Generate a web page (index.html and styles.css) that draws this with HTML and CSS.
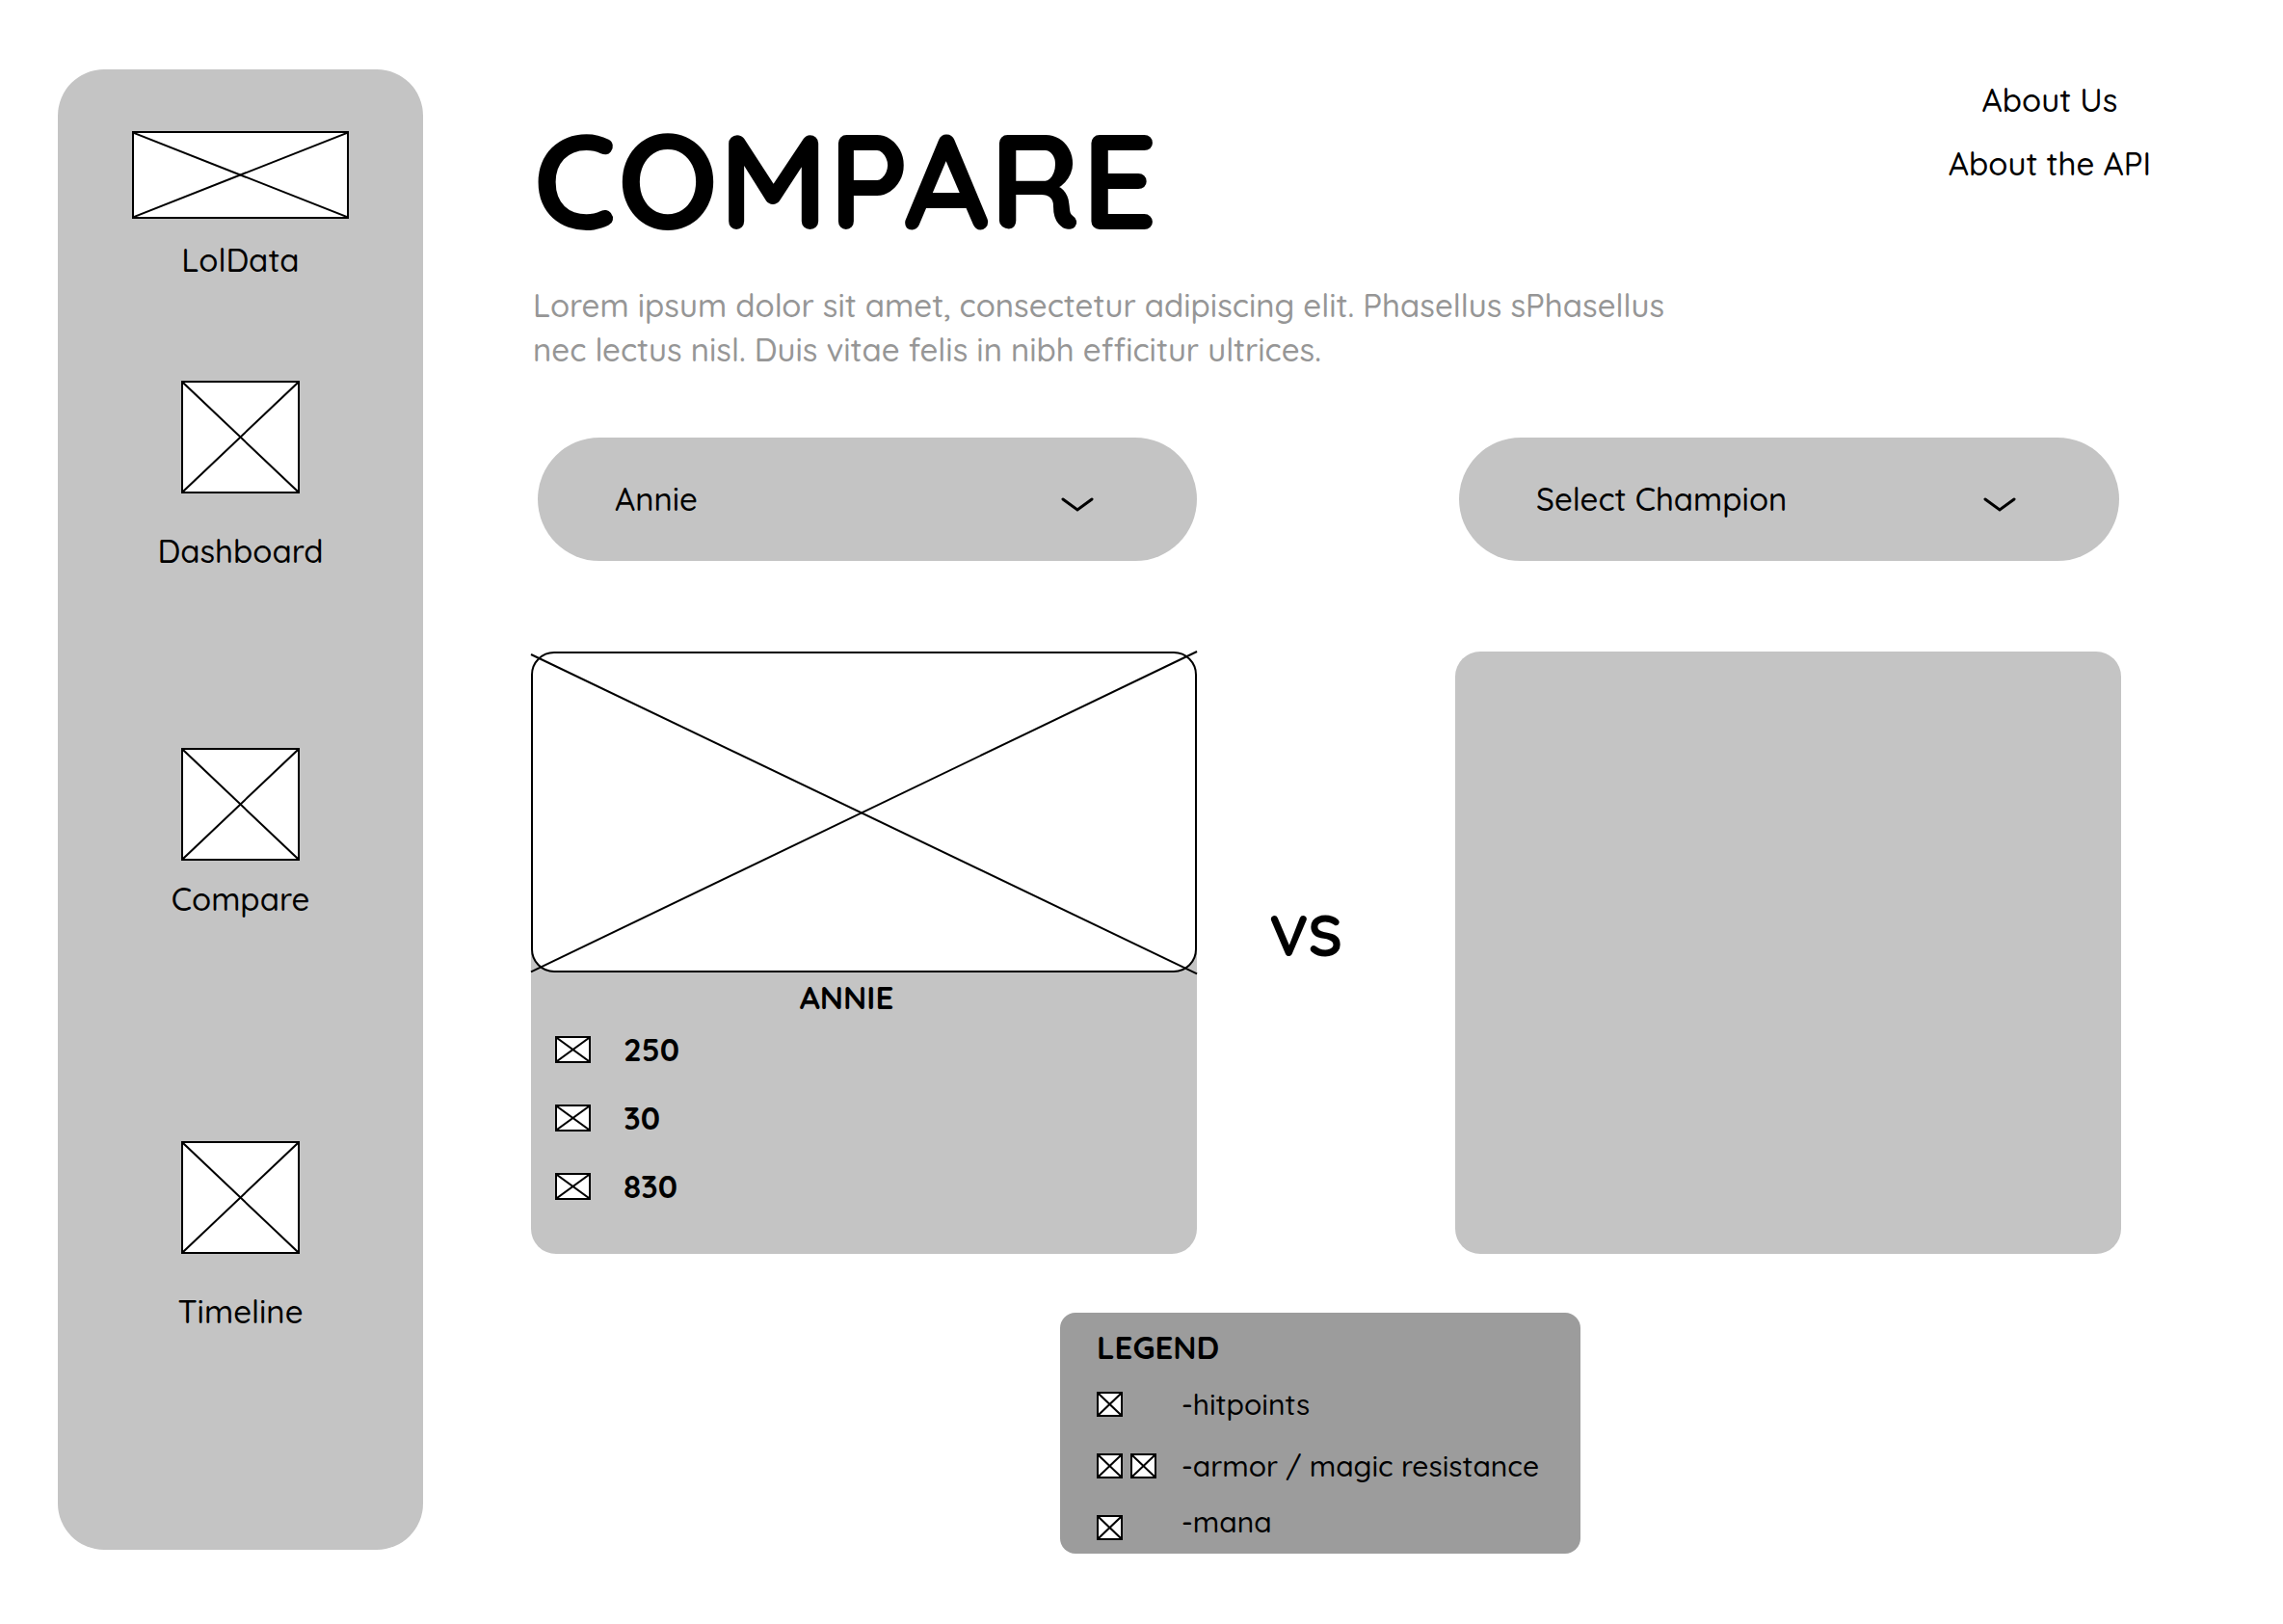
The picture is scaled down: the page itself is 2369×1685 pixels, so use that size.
FILE: index.html
```html
<!DOCTYPE html>
<html lang="en">
<head>
<meta charset="utf-8">
<title>Compare - LolData</title>
<link rel="stylesheet" href="styles.css">
</head>
<body>
<div class="page">
  <nav class="sidebar" aria-label="Main">
    <a class="side-link side-logo" href="#">
      <svg class="placeholder logo-box" aria-hidden="true"><line x1="0" y1="0" x2="100%" y2="100%"/><line x1="0" y1="100%" x2="100%" y2="0"/></svg>
      <span>LolData</span>
    </a>
    <a class="side-link side-dashboard" href="#">
      <svg class="placeholder side-box" aria-hidden="true"><line x1="0" y1="0" x2="100%" y2="100%"/><line x1="0" y1="100%" x2="100%" y2="0"/></svg>
      <span>Dashboard</span>
    </a>
    <a class="side-link side-compare" href="#">
      <svg class="placeholder side-box" aria-hidden="true"><line x1="0" y1="0" x2="100%" y2="100%"/><line x1="0" y1="100%" x2="100%" y2="0"/></svg>
      <span>Compare</span>
    </a>
    <a class="side-link side-timeline" href="#">
      <svg class="placeholder side-box" aria-hidden="true"><line x1="0" y1="0" x2="100%" y2="100%"/><line x1="0" y1="100%" x2="100%" y2="0"/></svg>
      <span>Timeline</span>
    </a>
  </nav>

  <main class="main">
    <header class="header">
      <div class="intro">
        <h1>COMPARE</h1>
        <p>Lorem ipsum dolor sit amet, consectetur adipiscing elit. Phasellus sPhasellus<br>nec lectus nisl. Duis vitae felis in nibh efficitur ultrices.</p>
      </div>
      <nav class="about" aria-label="About">
        <a href="#">About Us</a>
        <a href="#">About the API</a>
      </nav>
    </header>

    <section class="compare">
      <div class="picker">
        <select aria-label="First champion"><option>Annie</option></select>
        <svg class="chevron" viewBox="0 0 34 16" aria-hidden="true"><path d="M2 2L17 13L32 2"/></svg>
      </div>
      <div class="picker picker-right">
        <select aria-label="Second champion"><option>Select Champion</option></select>
        <svg class="chevron" viewBox="0 0 34 16" aria-hidden="true"><path d="M2 2L17 13L32 2"/></svg>
      </div>
      <article class="card card-filled">
        <svg class="placeholder portrait" aria-hidden="true"><line x1="-2" y1="1" x2="100.3%" y2="101%"/><line x1="-2" y1="100.4%" x2="100.3%" y2="-2"/></svg>
        <h2>ANNIE</h2>
        <ul class="stats">
          <li><svg class="placeholder stat-box" aria-hidden="true"><line x1="0" y1="0" x2="100%" y2="100%"/><line x1="0" y1="100%" x2="100%" y2="0"/></svg>250</li>
          <li><svg class="placeholder stat-box" aria-hidden="true"><line x1="0" y1="0" x2="100%" y2="100%"/><line x1="0" y1="100%" x2="100%" y2="0"/></svg>30</li>
          <li><svg class="placeholder stat-box" aria-hidden="true"><line x1="0" y1="0" x2="100%" y2="100%"/><line x1="0" y1="100%" x2="100%" y2="0"/></svg>830</li>
        </ul>
      </article>
      <div class="versus">VS</div>
      <article class="card"></article>
    </section>

    <section class="legend">
      <h2>LEGEND</h2>
      <ul>
        <li><span class="keys"><svg class="placeholder key-box" aria-hidden="true"><line x1="0" y1="0" x2="100%" y2="100%"/><line x1="0" y1="100%" x2="100%" y2="0"/></svg></span><span>-hitpoints</span></li>
        <li><span class="keys"><svg class="placeholder key-box" aria-hidden="true"><line x1="0" y1="0" x2="100%" y2="100%"/><line x1="0" y1="100%" x2="100%" y2="0"/></svg><svg class="placeholder key-box" aria-hidden="true"><line x1="0" y1="0" x2="100%" y2="100%"/><line x1="0" y1="100%" x2="100%" y2="0"/></svg></span><span>-armor / magic resistance</span></li>
        <li><span class="keys"><svg class="placeholder key-box" aria-hidden="true"><line x1="0" y1="0" x2="100%" y2="100%"/><line x1="0" y1="100%" x2="100%" y2="0"/></svg></span><span>-mana</span></li>
      </ul>
    </section>
  </main>
</div>
</body>
</html>
```

FILE: styles.css
```css
* {
  box-sizing: border-box;
}

body {
  margin: 0;
  background: #fff;
  color: #000;
  font: 500 33px/42px Quicksand, Lato, sans-serif;
}

h1, h2, p, ul {
  margin: 0;
  padding: 0;
}

ul {
  list-style: none;
}

a {
  color: inherit;
  text-decoration: none;
}

.page {
  display: flex;
  align-items: flex-start;
  padding: 72px 137px 72px 60px;
}

/* Crossed box that stands in for an image */
.placeholder {
  display: block;
  flex: none;
  background: #fff;
  border: 2px solid #000;
}

.placeholder line {
  stroke: #000;
  stroke-width: 2;
}

.sidebar {
  display: flex;
  flex: none;
  flex-direction: column;
  align-items: center;
  width: 379px;
  padding: 64px 0 226px;
  background: #c4c4c4;
  border-radius: 48px;
}

.side-link {
  display: flex;
  flex-direction: column;
  align-items: center;
}

.logo-box {
  width: 225px;
  height: 91px;
}

.side-box {
  width: 123px;
  height: 117px;
}

.side-logo {
  gap: 22px;
}

.side-dashboard {
  gap: 39px;
  margin-top: 104px;
}

.side-compare {
  gap: 19px;
  margin-top: 183px;
}

.side-timeline {
  gap: 39px;
  margin-top: 230px;
}

.main {
  flex: 1;
  min-width: 0;
  padding-left: 112px;
}

.header {
  display: flex;
  justify-content: space-between;
  padding-top: 11px;
}

.intro {
  padding-top: 32px;
  padding-left: 2px;
}

h1 {
  font-size: 139px;
  line-height: 142px;
}

.intro p {
  margin-top: 37px;
  color: #969696;
  line-height: 46px;
}

.about {
  display: flex;
  flex-direction: column;
  align-items: center;
  gap: 24px;
}

.compare {
  display: grid;
  grid-template-columns: 1fr 268px 1fr;
  row-gap: 94px;
  padding: 68px 31px 0 0;
}

.picker {
  position: relative;
  margin-left: 7px;
}

.picker-right {
  grid-column: 3;
  margin: 0 2px 0 4px;
}

.picker select {
  appearance: none;
  display: block;
  width: 100%;
  height: 128px;
  padding: 0 120px 0 80px;
  background: #c4c4c4;
  border: 0;
  border-radius: 64px;
  color: #000;
  font: inherit;
}

.chevron {
  position: absolute;
  top: 62px;
  right: 107px;
  width: 34px;
  height: 16px;
  fill: none;
  stroke: #000;
  stroke-width: 3;
  stroke-linecap: round;
  pointer-events: none;
}

.card {
  min-height: 625px;
  background: #c4c4c4;
  border-radius: 26px;
}

/* White behind the rounded top corners of the portrait */
.card-filled {
  background: linear-gradient(#fff 300px, #c4c4c4 300px);
}

/* The diagonals run past the rounded corners of the frame */
.portrait {
  width: 100%;
  height: 333px;
  border-radius: 24px;
  overflow: visible;
}

.card h2 {
  margin-top: 5px;
  padding-right: 36px;
  font-size: 33px;
  line-height: 42px;
  text-align: center;
}

.stats {
  display: grid;
  gap: 29px;
  padding: 12px 25px 0;
  font-weight: 700;
}

.stats li {
  display: flex;
  align-items: center;
  gap: 34px;
}

.stat-box {
  width: 37px;
  height: 28px;
}

.versus {
  align-self: center;
  padding-right: 42px;
  padding-bottom: 38px;
  font-size: 60px;
  font-weight: 700;
  line-height: 70px;
  text-align: center;
}

.legend {
  width: 540px;
  margin: 61px auto 0 549px;
  padding: 15px 38px 14px;
  background: #9c9c9c;
  border-radius: 16px;
}

.legend h2 {
  font-size: 33px;
  line-height: 42px;
}

.legend ul {
  padding-top: 17px;
  font-size: 30px;
}

.legend li {
  display: flex;
  align-items: center;
  height: 42px;
  margin-bottom: 22px;
  white-space: nowrap;
}

.legend li:last-child {
  align-items: stretch;
  height: 38px;
  margin: -4px 0 0;
  line-height: 38px;
}

.keys {
  display: flex;
  align-items: center;
  gap: 8px;
  width: 88px;
}

.legend li:last-child .keys {
  align-items: flex-end;
}

.key-box {
  width: 27px;
  height: 26px;
}
```
